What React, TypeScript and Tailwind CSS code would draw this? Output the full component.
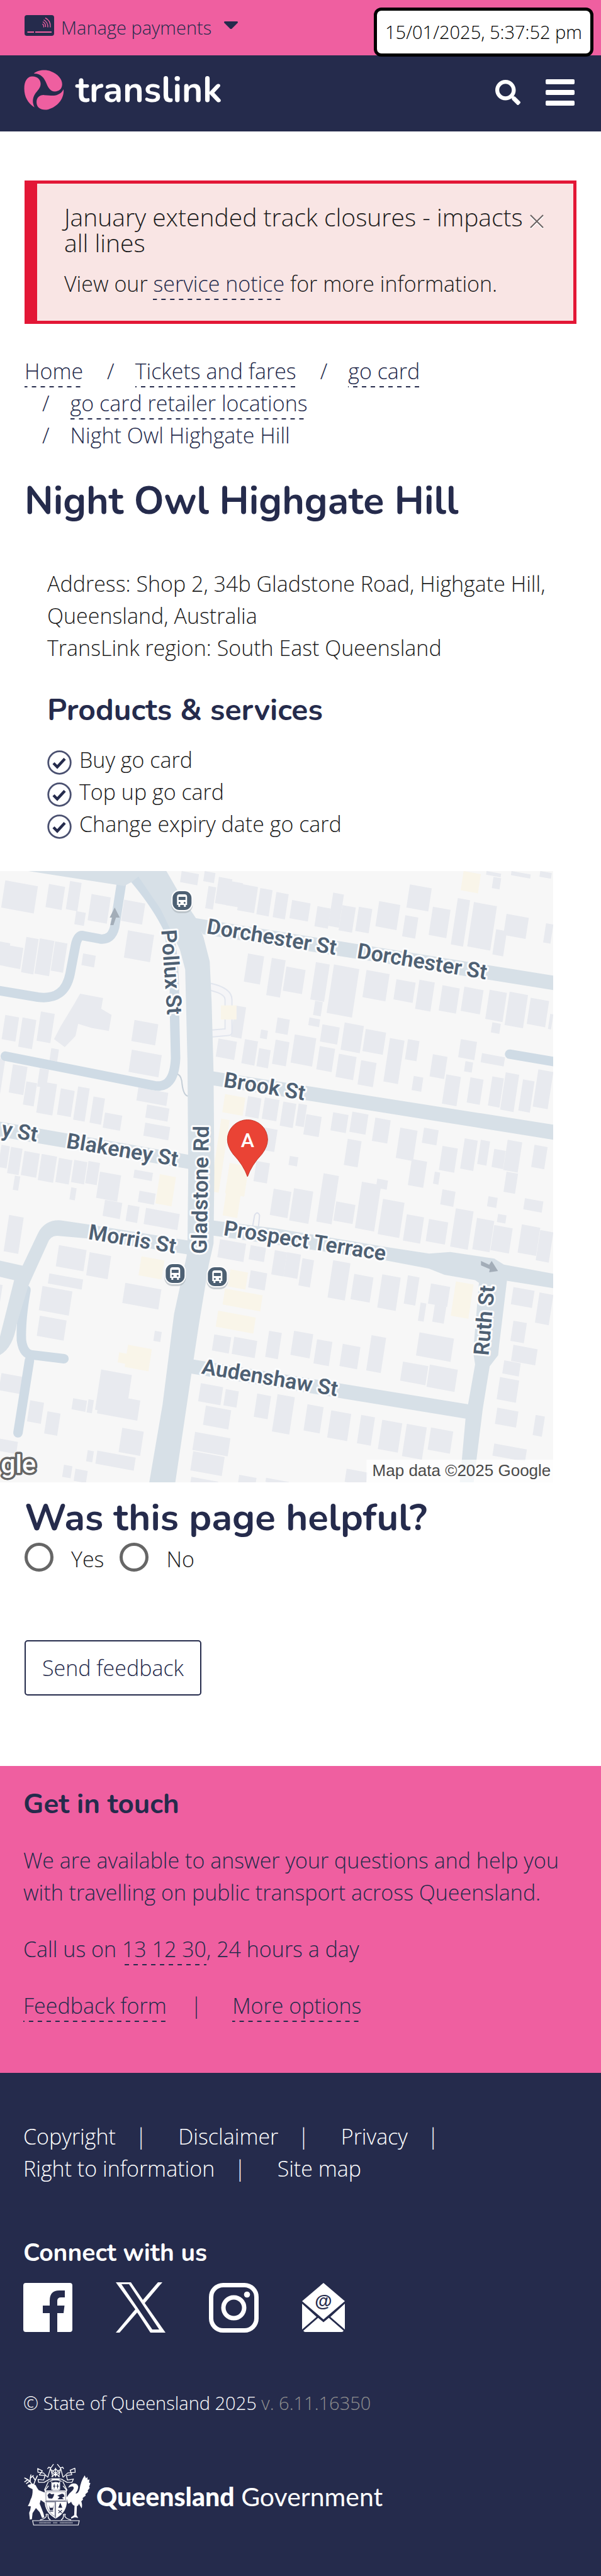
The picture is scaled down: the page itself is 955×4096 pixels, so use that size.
import React from "react";
import { FaSearch } from "react-icons/fa";

const DASHED =
  "bg-[linear-gradient(to_right,currentColor_50%,transparent_50%)] bg-[length:14px_2px] bg-repeat-x bg-bottom pb-[3px]";

function DashedLink({ href, children }: { href: string; children: React.ReactNode }) {
  return (
    <a href={href} className={`text-[#252b4c] ${DASHED}`}>
      {children}
    </a>
  );
}

const HEADING = "font-[Nunito,Lato,sans-serif] font-bold";

/* ---------- Map data: [x, y, width, height] of building footprints ---------- */
type Box = [number, number, number, number];

const NORTH: Box[] = [
  [475,51,45,55],[535,51,28,50],[572,80,35,130],[545,125,20,110],[600,100,35,120],[630,115,44,130],[680,135,32,130],
  [722,155,32,125],[763,195,48,90],[829,225,35,100],[870,158,28,165],[894,220,35,125],[937,228,35,120],[990,200,55,125],
  [1070,117,57,115],[1058,270,34,105],[1130,228,46,140],[1195,185,32,230],[1237,205,60,220],[1322,263,58,105],
  [1295,340,28,125],[1425,310,19,95],[1288,80,20,55],[1270,51,38,18],[1335,51,50,20],[1410,51,30,28],
  [15,97,85,135],[129,115,42,115],[184,100,30,140],[240,165,50,130],[325,193,55,105],[200,250,25,65],[335,345,68,135],
  [218,460,33,58],[0,400,28,115],[25,420,37,105],[70,378,32,175],[105,385,38,175],[145,400,32,145],
  [648,460,42,140],[710,482,36,185],[748,525,50,120],[825,503,36,185],[823,695,20,70],[872,515,66,240],[957,542,60,135],
  [1035,588,50,100],[1095,590,40,145],[1155,618,45,125],[1212,625,50,120],[1278,640,45,145],[1330,650,48,165],
  [1385,680,48,130],[1436,760,8,75],[615,718,28,155],[571,882,48,90],[725,778,32,75],[808,778,28,38],[842,812,45,85],
  [900,803,50,135],[955,835,53,110],[1018,880,38,215],[1065,885,30,100],[1285,802,22,50],[682,838,18,42],[640,885,34,120],
  [677,930,30,90],[720,888,36,120],[770,862,56,140],[835,920,40,115],[885,958,46,115],[943,990,40,120],[1130,960,38,110],
  [1080,1068,25,70],[1203,885,42,90],[1258,955,60,45],[1215,995,20,50],[1165,1060,38,145],[1228,1075,34,125],
  [1285,1070,30,145],[1320,1050,35,185],[1365,1085,30,155],[1405,1035,39,185],
  [15,765,36,120],[60,778,36,145],[108,748,36,145],[352,790,62,105],[345,938,78,110],[135,930,20,60],[0,980,15,190],
  [35,1010,38,140],[105,1030,24,90],[70,1095,28,115],[108,1095,42,155],[160,1130,36,130],[205,1120,30,165],
  [245,1170,30,130],[275,1250,45,75],[362,1125,78,65],[385,1210,58,65],[380,1300,65,65],
  [648,1168,35,100],[692,1175,38,105],[740,1195,34,120],[780,1205,22,110],[800,1258,40,100],[870,1248,40,90],
  [920,1245,42,100],[980,1275,40,115],[1045,1325,45,150],[1107,1325,38,75],[908,1380,36,130],[757,1465,22,45],
  [680,1320,45,110],[1155,1415,40,120],[1213,1378,34,150],[1255,1385,24,120],[1290,1430,30,90],[1325,1385,38,150],
  [1395,1410,34,110],[1075,1480,40,130],[670,1490,35,100],
  [5,1410,22,110],[30,1420,30,130],[65,1440,40,120],[110,1455,40,130],[155,1475,35,120],[195,1485,34,110],[232,1490,30,110],
];

const SOUTH: Box[] = [
  [845,8,40,240],[945,50,50,230],[985,35,28,45],[1135,0,14,60],[1155,88,34,75],[1275,122,24,50],[1322,0,30,100],
  [1370,132,48,55],[1300,210,22,40],[1190,182,46,190],[1245,230,45,155],[1290,265,48,125],[1362,262,48,140],
  [1410,290,34,150],[715,85,46,130],[768,82,50,160],[878,148,50,95],[1000,135,56,175],[1062,212,45,130],[1120,235,50,110],
  [655,490,43,85],[575,335,68,90],[655,365,40,70],[718,390,32,120],[750,400,36,120],[790,430,30,135],[870,440,45,185],
  [925,508,50,125],[998,510,48,165],[1065,515,30,140],[1125,555,50,100],[1135,660,30,85],[1098,650,15,90],
  [1095,798,90,115],[1052,943,66,95],[1122,958,73,110],[1340,573,55,85],[1408,600,36,150],[1340,740,35,100],
  [1340,860,63,80],[1316,937,43,65],[1305,1020,50,110],[1298,1172,55,80],[1398,1208,24,100],[1290,1350,85,60],
  [560,808,44,80],[612,820,60,85],[703,790,33,130],[768,790,50,120],[828,832,40,120],[895,855,46,110],[970,812,38,175],
  [525,1050,58,90],[590,1080,34,80],[538,1162,66,95],[510,1292,92,90],[505,1388,82,95],[500,1515,70,30],[672,1102,36,115],
  [725,1105,45,185],[803,1155,42,130],[865,1185,52,135],[943,1208,36,140],[998,1232,52,145],[1062,1252,52,160],
  [1125,1270,58,110],[905,1475,55,65],[625,1505,45,38],[695,1520,60,20],
  [25,215,38,180],[382,180,88,80],[275,140,45,80],[335,165,30,80],[262,0,55,130],[365,95,42,55],[352,-10,48,40],
  [40,20,14,70],[187,78,14,60],[155,365,72,105],[235,400,56,115],[130,505,88,50],[112,568,78,120],[105,715,70,100],
  [328,552,94,100],[265,982,80,200],[262,1100,105,100],[405,790,18,50],[80,1135,36,105],[125,1190,34,110],
  [192,1125,36,55],[232,1130,14,65],[320,1272,56,120],[255,1385,100,65],[230,1383,16,55],[5,1000,68,85],[0,1325,48,60],
  [168,1455,22,60],[198,1475,32,60],[0,560,8,110],
];

const SHOPS: Box[] = [
  [1210,51,45,95],[588,1158,53,90],[578,1280,22,360],[600,1500,50,150],[592,1630,38,130],
  [418,1556,42,145],[370,1963,60,95],[602,2028,46,85],[588,2123,98,80],[570,2233,98,80],[1190,2088,46,170],[335,2403,62,110],[312,2440,60,50],
];

function footprint([x, y, w, h]: Box, dy = 0) {
  const drop = w * 0.35;
  const lean = h * 0.08;
  return `${x},${y + dy} ${x + w},${y + drop + dy} ${x + w - lean},${y + drop + h + dy} ${x - lean},${y + h + dy}`;
}

function StreetName({ x, y, angle, children }: { x: number; y: number; angle: number; children: string }) {
  return (
    <text
      transform={`translate(${x} ${y}) rotate(${angle})`}
      fontSize="34"
      fill="#4e6073"
      stroke="#fbfcfd"
      strokeWidth="6"
      strokeLinejoin="round"
      paintOrder="stroke"
      fontFamily="Roboto, sans-serif"
      fontWeight="600"
    >
      {children}
    </text>
  );
}

function BusStop({ x, y }: { x: number; y: number }) {
  return (
    <g transform={`translate(${x} ${y})`}>
      <rect x="-17" y="-15" width="34" height="35" rx="13" fill="#a9b0b8" opacity=".6" />
      <rect x="-17" y="-17" width="34" height="34" rx="13" fill="#fff" />
      <rect x="-15" y="-15" width="30" height="30" rx="11" fill="#4d6073" />
      <path d="M-8,7V-6Q-8,-10 -4,-10H4Q8,-10 8,-6V7H6V10H3V7H-3V10H-6V7Z" fill="#fff" />
      <rect x="-5.500" y="-6" width="11" height="5" fill="#4d6073" />
      <circle cx="-4" cy="3.500" r="1.500" fill="#4d6073" />
      <circle cx="4" cy="3.500" r="1.500" fill="#4d6073" />
    </g>
  );
}

function LocationMap() {
  return (
    <svg
      viewBox="0 0 880 972"
      preserveAspectRatio="xMidYMid slice"
      role="img"
      aria-label="Map of Night Owl Highgate Hill"
      className="block h-[972px] w-[92%] bg-[#f7f7f7]"
    >
      <g transform="scale(.6094 .3203) translate(0 -51)">
        <g fill="#e8eaef">
          {NORTH.map((b, i) => <polygon key={i} points={footprint(b)} />)}
          {SOUTH.map((b, i) => <polygon key={i} points={footprint(b, 1543)} />)}
          <polygon points="210,660 270,682 265,735 292,765 285,845 240,830 205,810 198,870 170,925 142,885 160,820 195,710" />
        </g>
        <g fill="#f9f5e9">
          {SHOPS.map((b, i) => <polygon key={i} points={footprint(b)} />)}
        </g>
        <g fill="none" stroke="#cfdbe5" strokeLinecap="round" strokeLinejoin="round">
          <g strokeWidth="15">
            <path vectorEffect="non-scaling-stroke" d="M318,110 L300,330 Q292,395 262,388 L220,373 Q204,362 198,420 L184,560 Q170,695 100,677 L-10,642" />
            <path vectorEffect="non-scaling-stroke" d="M350,85 Q410,220 440,340 Q458,500 456,740 L459,980 Q455,1140 400,1115 L15,970" />
            <path vectorEffect="non-scaling-stroke" d="M1330,960 L1460,1002" />
            <path vectorEffect="non-scaling-stroke" d="M69,2130 Q55,2280 57,2380 Q62,2450 85,2453 L168,2472" />
            <path vectorEffect="non-scaling-stroke" d="M78,2480 L48,2840" />
          </g>
          <g stroke="#e2e6ee" strokeWidth="13" strokeLinecap="butt">
            <path vectorEffect="non-scaling-stroke" d="M548,625 Q597,645 597,690 V850 L550,858" />
          </g>
          <g stroke="#f5f5f7" strokeWidth="9" strokeLinecap="butt">
            <path vectorEffect="non-scaling-stroke" d="M548,625 Q597,645 597,690 V850 L550,858" />
          </g>
          <path vectorEffect="non-scaling-stroke" strokeWidth="2" stroke="#dde1ec" d="M660,1815 L665,1760 Q672,1735 678,1760 L675,1820" />
          <path vectorEffect="non-scaling-stroke" strokeWidth="2" stroke="#c4ced7" d="M465,1060 Q475,1070 476,1110 Q480,1168 492,1168" />
        </g>
        <polygon points="577,718 618,718 618,788 577,788" fill="#f9f5e9" />
        <g fill="#d7e0e7">
          <path d="M75,51 H435 L465,150 L512,285 L532,380 L548,500 L553,700 L558,1050 L560,1543 L558,1900 L545,2010 L520,2300 L500,2550 L458,3090 H390 L425,2700 L455,2250 L488,1960 L490,1900 L492,1543 L490,1000 L484,540 L470,440 L420,240 L362,78 L345,105 L325,125 Z" />
          <path d="M505,283 L1444,570 V642 L530,365Z" />
          <path d="M556,1045 L1444,1310 V1385 L556,1115Z" />
          <path d="M0,1295 L494,1460 V1530 L0,1370Z" />
          <path d="M555,1785 L720,1825 L1010,1918 L1120,1950 L1175,1942 L1290,1975 L1315,2005 L1444,2050 V2122 L1323,2085 L1303,2400 L1300,2455 L1278,2510 L1260,2720 L1236,3090 H1200 L1215,2770 L1240,2500 L1235,2440 L1250,2095 L1240,2082 L1160,2055 L1120,2025 L1010,1985 L555,1860Z" />
          <path d="M498,2474 L1228,2700 L1218,2770 L496,2545Z" />
          <path d="M492,1885 L230,1805 L160,1785 Q118,1780 100,1850 L60,2010 L0,1985 V2065 L38,2082 L0,2370 V2455 Q35,2420 45,2300 L75,2110 L125,1900 Q132,1862 150,1862 L230,1875 L492,1955Z" />
        </g>
      </g>

      <g fill="#a3adb8">
        <path d="M183,58 L191,74 H185 L181,86 H176 L179,74 H175Z" />
        <path d="M765,620 L778,626 L782,620 L792,636 L778,638 L779,633 L765,627Z" />
      </g>

      <StreetName x={328} y={99} angle={9.5}>Dorchester St</StreetName>
      <StreetName x={567} y={138} angle={9.5}>Dorchester St</StreetName>
      <StreetName x={355} y={343} angle={9.5}>Brook St</StreetName>
      <StreetName x={105} y={440} angle={9.5}>Blakeney St</StreetName>
      <StreetName x={2} y={421} angle={9.5}>y St</StreetName>
      <StreetName x={140} y={585} angle={9.5}>Morris St</StreetName>
      <StreetName x={355} y={579} angle={9}>Prospect Terrace</StreetName>
      <StreetName x={320} y={799} angle={9.5}>Audenshaw St</StreetName>
      <StreetName x={257} y={94} angle={86}>Pollux St</StreetName>
      <StreetName x={329} y={609} angle={-89}>Gladstone Rd</StreetName>
      <StreetName x={777} y={771} angle={-85}>Ruth St</StreetName>

      <BusStop x={290} y={47} />
      <BusStop x={279} y={640} />
      <BusStop x={346} y={645} />

      <path d="M394,486 Q388,468 371,450 Q362,438 362,427 A32,31.500 0 0 1 426,427 Q426,438 417,450 Q400,468 394,486Z" fill="#ea4335" stroke="#c5392c" strokeWidth="1" />
      <text x="394" y="439" fontSize="32" fill="#fff" textAnchor="middle" fontFamily="Roboto, sans-serif" fontWeight="500">A</text>

      <text x="2" y="957" fontSize="41" fill="#fff" stroke="#666" strokeWidth="7" strokeLinejoin="round" paintOrder="stroke" fontFamily="Roboto, sans-serif" fontWeight="500">gle</text>
      <rect x="583" y="936" width="297" height="36" fill="#fff" opacity=".7" />
      <text x="876" y="962" fontSize="26" textAnchor="end" fill="#4a4a4a" fontFamily="'Liberation Sans', sans-serif">Map data ©2025 Google</text>
    </svg>
  );
}

/* ---------- Icons ---------- */
function CardIcon() {
  return (
    <svg viewBox="0 0 47 33" className="h-[33px] w-[47px]" aria-hidden="true">
      <rect width="47" height="33" rx="4" fill="#252b4c" />
      <g stroke="#ef5fa0" fill="none" strokeWidth="1.400">
        <path d="M4.500,27H15M17,27H43" strokeWidth="2.200" />
        <path d="M28.500,14q2.500,2 2,5.500M29,10.500q5,3 4.500,8.500M30.500,7.500q7,4 6.500,12M33,4.500q9,4.500 8,15" />
      </g>
    </svg>
  );
}

function TranslinkMark() {
  return (
    <svg viewBox="22 18 236 236" className="size-[64px]" fill="#ef5fa0" aria-hidden="true">
      <path d="M80,40C105,18 150,15 180,27C222,42 248,75 246,105C245,130 228,145 203,145C178,144 165,125 155,100C142,65 120,38 80,40Z" />
      <path d="M84,238C45,215 24,175 24,128C24,85 42,57 72,57C102,57 120,78 120,100C120,125 100,140 87,160C72,185 70,210 84,238Z" />
      <path d="M254,132C260,185 220,235 165,250C130,258 96,245 96,208C96,180 115,165 140,166C170,166 185,172 205,168C230,163 245,150 254,132Z" />
    </svg>
  );
}

function TickIcon() {
  return (
    <svg viewBox="0 0 39 39" className="mt-2 size-[39px] shrink-0" fill="none" aria-hidden="true">
      <circle cx="19.500" cy="19.500" r="17.800" stroke="#4a5070" strokeWidth="2.800" />
      <path d="M10,20.500l6,6l12,-13" stroke="#252b4c" strokeWidth="4.500" />
    </svg>
  );
}

function FacebookIcon() {
  return (
    <svg viewBox="0 0 78 78" className="size-[78px]" fill="#fff" aria-hidden="true">
      <path d="M4,0H74Q78,0 78,4V74Q78,78 74,78H54V48H64L65.500,36H54V28.500Q54,23 60,23H66V12H57Q42,12 42,28V36H31V48H42V78H4Q0,78 0,74V4Q0,0 4,0Z" />
    </svg>
  );
}

function XIcon() {
  return (
    <svg viewBox="0 0 79 80" className="h-[80px] w-[79px]" fill="#fff" aria-hidden="true">
      <path fillRule="evenodd" d="M0,0H24L43,28L67,0H74L46,33L79,80H55L34,48L6,80H0L31,43ZM9,3L58,75H69L21,3Z" />
    </svg>
  );
}

function InstagramIcon() {
  return (
    <svg viewBox="0 0 79 79" className="size-[79px]" fill="none" stroke="#fff" aria-hidden="true">
      <rect x="3.500" y="3.500" width="72" height="72" rx="19" strokeWidth="7" />
      <circle cx="39.500" cy="39.500" r="16.500" strokeWidth="7" />
      <circle cx="60.500" cy="18.500" r="4.800" fill="#fff" stroke="none" />
    </svg>
  );
}

function MailIcon() {
  return (
    <svg viewBox="0 0 68 78" className="h-[78px] w-[68px]" fill="#fff" aria-hidden="true">
      <path d="M34,0L68,29L34,58L0,29Z" />
      <path d="M0,33L23,54L0,74ZM68,33L45,54L68,74Z" />
      <path d="M25.500,55.500L34,62.500L42.500,55.500L66,76Q65,78 63,78H5Q3,78 2,76Z" />
      <text x="34" y="38" fontSize="28" textAnchor="middle" fill="#252b4c" fontFamily="'Liberation Sans', sans-serif" fontWeight="700">@</text>
    </svg>
  );
}

function CrestIcon() {
  return (
    <svg viewBox="22 20 400 372" className="h-[100px] w-[108px] shrink-0" fill="#fff" aria-hidden="true">
      {/* deer */}
      <path d="M50,150L76,143L94,152Q102,168 112,182L148,196V212L156,235L150,258L124,240L118,262Q130,292 140,318L146,344L132,346L118,312L96,288Q88,300 76,318L72,354L60,356L56,316Q64,300 66,278L48,276Q58,262 64,238Q78,214 76,176L56,166L46,158Z" />
      <g fill="none" stroke="#fff" strokeWidth="6" strokeLinecap="round">
        <path d="M70,146Q62,124 30,110M48,120L30,132M58,128L40,142M62,130Q62,106 66,92M62,112L80,96M84,146Q90,124 104,98M92,124L80,104" />
      </g>
      {/* brolga */}
      <path d="M286,168Q294,146 318,142Q342,142 346,162Q344,184 330,200Q344,206 354,176Q360,130 384,94L392,112L400,104L402,122L412,118L410,138L418,140L410,162L414,168L402,184L404,192L388,206L390,214L372,228L374,238L364,248Q372,270 366,290L350,262Q346,276 338,276L336,330L346,346L326,342L304,350V342L322,330L324,274Q310,270 304,250Q296,262 286,262L276,226Q292,200 312,184Q326,166 314,160Q304,158 286,168Z" />
      {/* mantling and helm */}
      <g fill="none" stroke="#fff" strokeWidth="5" strokeLinejoin="round">
        <path d="M200,28L184,50L172,46L164,56M222,28L240,50L254,46L260,56M182,52L166,106M242,52L256,106M182,52L196,104M242,52L230,104" />
        <path d="M166,106L140,80L108,76L106,54L134,68L116,92L150,96L142,122L108,118L112,136L144,136L178,116M256,106L284,80L328,76L326,52L298,64L308,90L276,96L282,122L318,116L308,136L280,136L246,116" />
        <path d="M190,76L212,56L234,76L212,96ZM212,50V104M188,104L236,62M188,62L236,104M180,116H246M176,130Q212,112 248,130" />
        <path d="M190,132V180M236,132V180M170,130L146,182M254,130L280,182M170,156L148,186M256,156L280,186" />
      </g>
      <path d="M188,112H238L232,124H194ZM188,140Q212,126 238,140L232,182H194Z" />
      <path d="M204,146V172M197,158H211M224,146V172M217,158H231" stroke="#252b4c" strokeWidth="4" />
      {/* shield */}
      <path d="M148,184H278V262Q270,320 212,350Q156,320 148,262Z" />
      <path d="M155,191H271V244H155ZM156,252H208V338Q166,316 156,262Z" fill="none" stroke="#252b4c" strokeWidth="2" />
      <path d="M212,250V346M150,248H276" stroke="#252b4c" strokeWidth="3" />
      <path d="M164,212Q176,190 186,206L204,204Q200,226 190,232L170,230ZM222,214L246,204Q262,200 264,220L250,226L262,236H224L236,222ZM172,268L178,286H196L202,268L196,300H178ZM176,304H198V308H176ZM228,286L240,256L252,286Z" fill="#252b4c" />
      <path d="M228,300L250,318M250,300L228,318" stroke="#252b4c" strokeWidth="4" />
      {/* scroll */}
      <path d="M76,362H352L346,388H82Z" fill="none" stroke="#fff" strokeWidth="4" />
      <path d="M120,358Q152,352 158,334Q150,318 168,326Q164,350 182,358M304,358Q272,352 266,334Q276,318 258,326Q262,350 244,358" fill="none" stroke="#fff" strokeWidth="5" />
      <path d="M116,375H184M198,375H222M238,375H314" stroke="#fff" strokeWidth="8" strokeDasharray="4 3" opacity=".7" />
    </svg>
  );
}

/* ---------- Page ---------- */
export default function App() {
  const services = ["Buy go card", "Top up go card", "Change expiry date go card"];
  return (
    <div className="relative bg-white font-['Open_Sans',sans-serif] text-[34px] leading-[51px] font-light text-[#1c1c1c]">
      <div className="flex h-[88px] items-center bg-[#ef5fa0] px-[39px] pb-2">
        <button type="button" className="flex items-center text-[29px] leading-[44px] text-[#252b4c]">
          <CardIcon />
          <span className="ml-[11px] pt-2">Manage payments</span>
          <svg viewBox="0 0 22 12" className="ml-5 h-[12px] w-[22px]" fill="#252b4c" aria-hidden="true">
            <path d="M1,0H21Q22,0 22,2L12,12H10L0,2Q0,0 1,0Z" />
          </svg>
        </button>
      </div>
      <div className="absolute top-[12px] right-[12px] z-10 flex h-[78px] items-center rounded-[12px] border-[5px] border-black bg-white px-[13px] text-[29px] leading-[44px] text-black">
        15/01/2025, 5:37:52 pm
      </div>

      <header className="flex h-[121px] items-center justify-between bg-[#252b4c] pr-[42px] pb-3 pl-[38px] text-white">
        <a href="#home" className="flex items-center gap-[18px]">
          <TranslinkMark />
          <span className="font-[Nunito,Lato,sans-serif] text-[57px] leading-[64px] font-bold">translink</span>
        </a>
        <div className="flex items-center gap-[40px] pt-2">
          <button type="button" aria-label="Search">
            <FaSearch className="size-[40px]" />
          </button>
          <button type="button" aria-label="Menu" className="flex w-[46px] flex-col gap-[9px]">
            <span className="h-[8px] rounded-[2px] bg-white" />
            <span className="h-[8px] rounded-[2px] bg-white" />
            <span className="h-[8px] rounded-[2px] bg-white" />
          </button>
        </div>
      </header>

      <main className="pb-[112px]">
        <div className="px-[39px] pt-[78px]">
          <section role="alert" className="border-[5px] border-l-[20px] border-[#e31736] bg-[#f9e5e4] pt-[32px] pr-[46px] pb-[33px] pl-[43px]">
            <div className="flex items-start justify-between gap-2">
              <h2 className="text-[39px] leading-[41px]">January extended track closures - impacts all lines</h2>
              <button type="button" aria-label="Close" className="mt-[16px] shrink-0">
                <svg viewBox="0 0 24 24" className="size-[24px]" fill="none" aria-hidden="true">
                  <path d="M2,4L22,24M22,4L2,24" stroke="#fff" strokeWidth="2" />
                  <path d="M2,2L22,22M22,2L2,22" stroke="#6b6363" strokeWidth="2" />
                </svg>
              </button>
            </div>
            <p className="mt-[20px]">
              View our <DashedLink href="#notice">service notice</DashedLink> for more information.
            </p>
          </section>

          <nav aria-label="Breadcrumb" className="mt-[50px] text-[#252b4c]">
            <ol className="flex flex-wrap">
              <li className="mr-[10px]"><DashedLink href="#home">Home</DashedLink></li>
              <li className="mr-[10px] ml-[28px]"><span className="mr-[33px]">/</span><DashedLink href="#tickets">Tickets and fares</DashedLink></li>
              <li className="mr-[10px] ml-[28px]"><span className="mr-[33px]">/</span><DashedLink href="#gocard">go card</DashedLink></li>
              <li className="mr-[10px] ml-[28px] basis-[90%]"><span className="mr-[33px]">/</span><DashedLink href="#retailers">go card retailer locations</DashedLink></li>
              <li className="ml-[28px]"><span className="mr-[33px]">/</span>Night Owl Highgate Hill</li>
            </ol>
          </nav>

          <h1 className={`mt-[43px] text-[61px] leading-[72px] text-[#252b4c] ${HEADING}`}>Night Owl Highgate Hill</h1>

          <div className="mt-[70px] pl-[36px]">
            <p>Address: Shop 2, 34b Gladstone Road, Highgate Hill, Queensland, Australia</p>
            <p>TransLink region: South East Queensland</p>
            <h2 className={`mt-[45px] text-[48px] leading-[56px] text-[#252b4c] ${HEADING}`}>Products &amp; services</h2>
            <ul className="mt-[26px]">
              {services.map((s) => (
                <li key={s} className="flex items-center gap-3">
                  <TickIcon />
                  {s}
                </li>
              ))}
            </ul>
          </div>
        </div>

        <div className="mt-[49px]">
          <LocationMap />
        </div>

        <form className="px-[39px] pt-[21px]">
          <fieldset>
            <legend className={`text-[60px] leading-[70px] text-[#252b4c] ${HEADING}`}>Was this page helpful?</legend>
            <div className="mt-[6px] flex items-center">
              <input id="helpful-yes" type="radio" name="helpful" className="-mt-2 size-[46px] appearance-none rounded-full border-[5px] border-[#666] bg-white" />
              <label htmlFor="helpful-yes" className="mr-[25px] ml-[28px]">Yes</label>
              <input id="helpful-no" type="radio" name="helpful" className="-mt-2 size-[46px] appearance-none rounded-full border-[5px] border-[#666] bg-white" />
              <label htmlFor="helpful-no" className="ml-[28px]">No</label>
            </div>
          </fieldset>
          <button type="button" className="mt-[103px] block h-[88px] rounded-[5px] border-2 border-[#252b4c] px-[26px] text-[#252b4c]">
            Send feedback
          </button>
        </form>
      </main>

      <section className="bg-[#ef5fa0] px-[37px] pt-[36px] pb-[81px] text-[#252b4c]">
        <h2 className={`text-[44px] leading-[50px] ${HEADING}`}>Get in touch</h2>
        <p className="mt-[39px]">
          We are available to answer your questions and help you with travelling on public transport across Queensland.
        </p>
        <p className="mt-[39px]">
          Call us on <DashedLink href="tel:131230">13 12 30</DashedLink>, 24 hours a day
        </p>
        <div className="mt-[39px] flex">
          <span><DashedLink href="#feedback">Feedback form</DashedLink></span>
          <span className="mr-[48px] ml-[38px]">|</span>
          <span><DashedLink href="#options">More options</DashedLink></span>
        </div>
      </section>

      <footer className="bg-[#252b4c] px-[37px] pt-[76px] pb-[81px] text-white">
        <ul className="flex max-w-[760px] flex-wrap">
          <li className="mr-[50px]"><a href="#copyright">Copyright</a><span className="ml-[31px]">|</span></li>
          <li className="mr-[50px]"><a href="#disclaimer">Disclaimer</a><span className="ml-[31px]">|</span></li>
          <li className="mr-[50px]"><a href="#privacy">Privacy</a><span className="ml-[31px]">|</span></li>
          <li className="mr-[50px]"><a href="#rti">Right to information</a><span className="ml-[31px]">|</span></li>
          <li><a href="#sitemap">Site map</a></li>
        </ul>
        <h2 className={`mt-[87px] text-[39px] leading-[44px] ${HEADING}`}>Connect with us</h2>
        <div className="mt-[25px] flex h-[78px] items-center gap-[69px]">
          <a href="#facebook" aria-label="Facebook"><FacebookIcon /></a>
          <a href="#x" aria-label="X"><XIcon /></a>
          <a href="#instagram" aria-label="Instagram"><InstagramIcon /></a>
          <a href="#mail" aria-label="Email"><MailIcon /></a>
        </div>
        <p className="mt-[91px] text-[29px] leading-[44px]">
          © State of Queensland 2025 <span className="text-[#8f8f8f]">v. 6.11.16350</span>
        </p>
        <div className="mt-[73px] flex items-center">
          <CrestIcon />
          <p className="ml-[8px] pt-2 font-[Lato,sans-serif] text-[41px] leading-[50px] font-normal">
            <b className="font-black">Queensland</b> Government
          </p>
        </div>
      </footer>
    </div>
  );
}
